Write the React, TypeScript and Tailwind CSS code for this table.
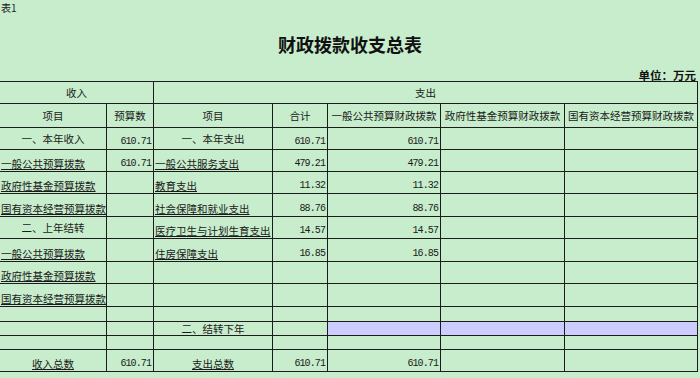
import React from "react";

type Kind = "c" | "l" | "n" | "cb" | "e";
type Cell = { t?: string; k: Kind; lav?: boolean };

const CJK = { fontFamily: '"Noto Sans CJK SC", "Noto Sans", sans-serif' };
const MONO = { fontFamily: '"Liberation Mono", "DejaVu Sans Mono", monospace' };

const kindClass: Record<Kind, string> = {
  c: "items-center justify-center",
  l: "items-end justify-start pl-[1px] pb-[1px]",
  n: "items-end justify-end pr-[2px] pb-[2px]",
  cb: "items-end justify-center pb-[1px]",
  e: "",
};

const e: Cell = { k: "e" };
const n = (t: string): Cell => ({ t, k: "n" });
const l = (t: string): Cell => ({ t, k: "l" });
const c = (t: string): Cell => ({ t, k: "c" });
const cb = (t: string): Cell => ({ t, k: "cb" });
const lav: Cell = { k: "e", lav: true };

const rows: Cell[][] = [
  [c("一、本年收入"), n("610.71"), c("一、本年支出"), n("610.71"), n("610.71"), e, e],
  [l("一般公共预算拨款"), n("610.71"), l("一般公共服务支出"), n("479.21"), n("479.21"), e, e],
  [l("政府性基金预算拨款"), e, l("教育支出"), n("11.32"), n("11.32"), e, e],
  [l("国有资本经营预算拨款"), e, l("社会保障和就业支出"), n("88.76"), n("88.76"), e, e],
  [c("二、上年结转"), e, l("医疗卫生与计划生育支出"), n("14.57"), n("14.57"), e, e],
  [l("一般公共预算拨款"), e, l("住房保障支出"), n("16.85"), n("16.85"), e, e],
  [l("政府性基金预算拨款"), e, e, e, e, e, e],
  [l("国有资本经营预算拨款"), e, e, e, e, e, e],
  [e, e, e, e, e, e, e],
  [e, e, c("二、结转下年"), e, lav, lav, lav],
  [e, e, e, e, e, e, e],
  [cb("收入总数"), n("610.71"), cb("支出总数"), n("610.71"), n("610.71"), e, e],
];

function GridCell({ cell }: { cell: Cell }) {
  const isNum = cell.k === "n";
  const ul = cell.k === "l" || cell.k === "cb";
  return (
    <div
      className={`flex whitespace-nowrap border-r border-b border-[#1c1c1c] ${kindClass[cell.k]} ${
        cell.lav ? "bg-[#CCCCFF]" : ""
      }`}
    >
      {cell.t ? (
        isNum ? (
          <span className="text-[10px] leading-[10px] tracking-[-0.9px] text-[#1a1a1a]" style={MONO}>
            {cell.t}
          </span>
        ) : (
          <span
            className={`text-[10.5px] leading-[12px] text-[#1a1a1a] ${
              ul ? "underline decoration-1 underline-offset-[1px]" : ""
            }`}
            style={CJK}
          >
            {cell.t}
          </span>
        )
      ) : null}
    </div>
  );
}

function HeadCell({ t, span }: { t: string; span?: string }) {
  return (
    <div
      className={`flex items-center justify-center whitespace-nowrap border-r border-b border-[#1c1c1c] ${span ?? ""}`}
    >
      <span className="text-[10.5px] leading-[12px] text-[#1a1a1a]" style={CJK}>
        {t}
      </span>
    </div>
  );
}

export default function App() {
  return (
    <div className="w-[700px] h-[378px] bg-[#C7EDCC] overflow-hidden" style={CJK}>
      <div className="h-[14px] pl-[1px] pt-[2px] text-[10px] leading-[11px] text-[#1a1a1a]">表1</div>
      <div className="h-[56px] pt-[4px] flex items-center justify-center">
        <span className="text-[18px] leading-[20px] font-bold text-[#111]">财政拨款收支总表</span>
      </div>
      <div className="h-[11px] flex items-end justify-end pr-[4px]">
        <span className="text-[11.5px] leading-[12px] font-bold text-[#111]">单位：万元</span>
      </div>
      <div className="w-[698px] border-t border-[#1c1c1c] grid grid-cols-[107px_47px_119px_55px_113px_124px_133px] grid-rows-[22px_24px_22px_22px_22px_23px_22px_23px_22px_23px_15px_14px_14px_22px]">
        <HeadCell t="收入" span="col-span-2" />
        <HeadCell t="支出" span="col-span-5" />
        <HeadCell t="项目" />
        <HeadCell t="预算数" />
        <HeadCell t="项目" />
        <HeadCell t="合计" />
        <HeadCell t="一般公共预算财政拨款" />
        <HeadCell t="政府性基金预算财政拨款" />
        <HeadCell t="国有资本经营预算财政拨款" />
        {rows.map((r, i) => r.map((cell, j) => <GridCell key={`${i}-${j}`} cell={cell} />))}
      </div>
    </div>
  );
}
